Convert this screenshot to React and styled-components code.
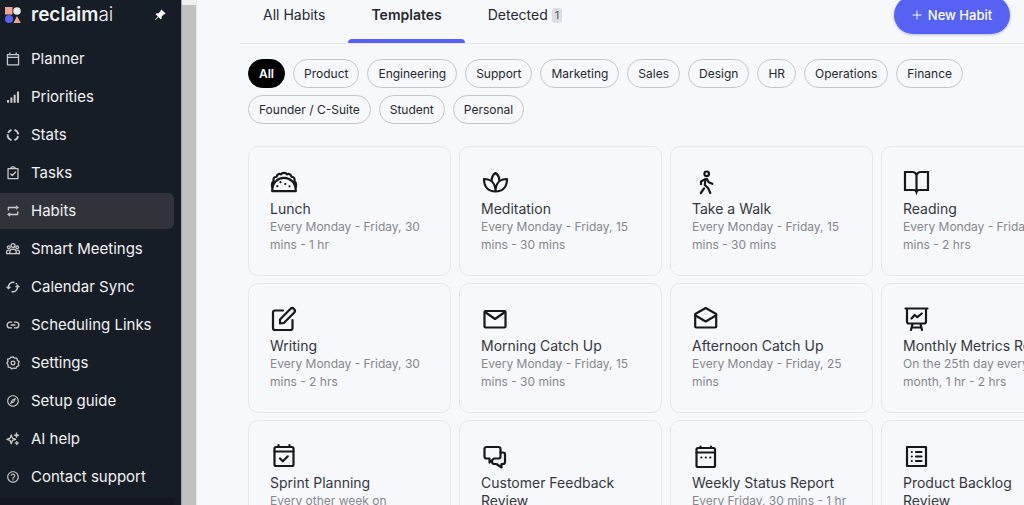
import React from 'react';
import styled, { createGlobalStyle } from 'styled-components';
import { MdOutlineExplore, MdHelpOutline } from 'react-icons/md';
import { BsPinAngleFill } from 'react-icons/bs';

const GlobalStyle = createGlobalStyle`
  * {
    box-sizing: border-box;
  }

  body {
    margin: 0;
    overflow: hidden;
    background-color: #f7f8fc;
    font-family: 'Inter', 'Liberation Sans', sans-serif;
  }

  button {
    font-family: inherit;
    cursor: pointer;
  }
`;

// Page shell
const Page = styled.div`
  display: flex;
  height: 100vh;
  overflow: hidden;
`;

// Sidebar
const Sidebar = styled.aside`
  display: flex;
  flex-direction: column;
  flex: 0 0 181px;
  background-color: #171d26;
  color: #f1f2f4;
`;

const Brand = styled.div`
  display: flex;
  align-items: center;
  height: 30px;
  margin-bottom: 11px;
  padding: 0 15px 0 5px;
`;

const BrandName = styled.span`
  flex: 1;
  margin-left: 10px;
  font-size: 19px;
  font-weight: 600;
  line-height: 24px;

  span {
    font-weight: 300;
  }
`;

const PinButton = styled.button`
  display: flex;
  padding: 0;
  border: 0;
  background: none;
  color: #fff;
`;

const Nav = styled.nav`
  display: flex;
  flex-direction: column;
  gap: 2px;
  padding-right: 7px;
`;

const NavLink = styled.a`
  display: flex;
  align-items: center;
  gap: 11px;
  flex: 0 0 36px;
  padding-left: 6px;
  border-radius: 0 6px 6px 0;
  background-color: ${({ $active }) => ($active ? '#303339' : 'transparent')};
  color: inherit;
  font-size: 15px;
  line-height: 20px;
  text-decoration: none;
  white-space: nowrap;

  svg {
    flex: none;
    color: #c9cbce;
  }
`;

const SidebarFooter = styled.div`
  flex: 1;
  margin: 3px 7px 0 0;
  background-color: #121720;
`;

const ScrollTrack = styled.div`
  flex: 0 0 16px;
  padding-top: 5px;
  border-left: 1px solid #a3a5a8;
  border-right: 1px solid #e4e5e9;
  background-color: #f1f1f3;
`;

const ScrollThumb = styled.div`
  height: 100%;
  background-color: #c1c1c1;
`;

// Main area
const Main = styled.main`
  flex: 1;
  min-width: 0;
  padding-left: 43px;
  overflow: hidden;
`;

const Header = styled.header`
  display: flex;
  justify-content: space-between;
  align-items: flex-start;
  height: 48px;
  margin-top: -4px;
  padding-right: 14px;
  border-bottom: 1px solid #e6e7eb;
`;

const Tabs = styled.div`
  display: flex;
  height: 47px;
`;

const Tab = styled.button`
  display: flex;
  align-items: center;
  gap: 4px;
  padding: 0 23px 6px;
  border: 0;
  border-bottom: 3px solid transparent;
  background: none;
  color: #25282d;
  font-size: 14px;
  font-weight: ${({ $active }) => ($active ? 600 : 400)};
  line-height: 20px;
  position: relative;

  &::after {
    content: '';
    display: ${({ $active }) => ($active ? 'block' : 'none')};
    position: absolute;
    right: 0;
    bottom: -3px;
    left: 0;
    height: 4px;
    border-radius: 4px 4px 0 0;
    background-color: #5562f5;
  }
`;

const Badge = styled.span`
  padding: 0 3px;
  border-radius: 3px;
  background-color: #dcdde1;
  color: #55585e;
  font-size: 11px;
  line-height: 15px;
`;

const NewButton = styled.button`
  display: flex;
  align-items: center;
  justify-content: center;
  gap: 6px;
  min-width: 116px;
  height: 38px;
  border: 0;
  border-radius: 19px;
  background-color: #5562f3;
  box-shadow: 0 1px 3px rgba(40, 50, 140, 0.3);
  color: #fff;
  font-size: 13px;
  font-weight: 500;
`;

const Chips = styled.div`
  display: flex;
  flex-wrap: wrap;
  gap: 7px 8px;
  padding: 15px 8px 0;
`;

const Chip = styled.button`
  height: 29px;
  padding: 0 10px;
  border: 1px solid ${({ $active }) => ($active ? '#000' : '#c4c5ca')};
  border-radius: 15px;
  background-color: ${({ $active }) => ($active ? '#000' : 'transparent')};
  color: ${({ $active }) => ($active ? '#fff' : '#25282d')};
  font-size: 12px;
  font-weight: ${({ $active }) => ($active ? 600 : 400)};
`;

const Grid = styled.div`
  display: grid;
  grid-template-columns: repeat(4, minmax(203px, 1fr));
  gap: 7px 8px;
  padding: 22px 8px 0;
`;

const Card = styled.button`
  display: flex;
  flex-direction: column;
  align-items: flex-start;
  min-height: 130px;
  padding: 21px;
  border: 1px solid #e6e7eb;
  border-radius: 10px;
  background: none;
  text-align: left;
`;

const CardIcon = styled.svg`
  flex: none;
  width: 28px;
  height: 28px;
  margin-bottom: 4px;
  fill: none;
  stroke: #15181d;
  stroke-width: 2.2;
  stroke-linecap: round;
  stroke-linejoin: round;
`;

const CardTitle = styled.span`
  color: #34373b;
  font-size: 14px;
  line-height: 18px;
`;

const CardText = styled.span`
  color: #85878b;
  font-size: 12px;
  line-height: 18px;
`;

// Small icons for the sidebar
const NavSvg = ({ children }) => (
  <svg
    width="14"
    height="14"
    viewBox="0 0 24 24"
    fill="none"
    stroke="currentColor"
    strokeWidth="2.2"
    strokeLinejoin="round"
    aria-hidden="true"
  >
    {children}
  </svg>
);

const PlannerIcon = () => (
  <NavSvg>
    <path d="M2.500 4.500h19v17.500h-19zM2.500 9.300h19M6.500 4.500V1M17.500 4.500V1" />
  </NavSvg>
);

const PrioritiesIcon = () => (
  <NavSvg>
    <path strokeWidth="3.500" d="M3.500 17v5M9.200 13v9M14.800 8v14M20.500 2.500V22" />
  </NavSvg>
);

const StatsIcon = () => (
  <NavSvg>
    <path
      strokeWidth="3.200"
      d="M9.500 3.300A9 9 0 0 0 3.800 8.500M3 11a9 9 0 0 0 6.500 9.700M14.500 3.300A9 9 0 0 1 21 11M20.600 13.800A9 9 0 0 1 14.500 20.700"
    />
  </NavSvg>
);

const TasksIcon = () => (
  <NavSvg>
    <path d="M3.500 4.500h17v17h-17zM8.500 4.500c0-4 7-4 7 0M7.500 13l3.200 3.200L17 9.800" />
  </NavSvg>
);

const HabitsIcon = () => (
  <NavSvg>
    <path d="M4 11V6h14M20 13v5H6" />
    <path fill="currentColor" strokeWidth="1" d="M17.500 3 21.500 6l-4 3zM6.500 15l-4 3 4 3z" />
  </NavSvg>
);

const MeetingsIcon = () => (
  <NavSvg>
    <circle cx="12" cy="6" r="3.400" />
    <circle cx="4.800" cy="9" r="2.300" />
    <circle cx="19.200" cy="9" r="2.300" />
    <path d="M6.500 20v-3.500c0-5.500 11-5.500 11 0V20zM6 20H1v-3c0-2 2-3.200 4.500-3M18 20h5v-3c0-2-2-3.200-4.500-3" />
  </NavSvg>
);

const SyncIcon = () => (
  <NavSvg>
    <path
      strokeWidth="2.600"
      d="M14.500 4.200A8 8 0 0 0 4.200 12.500M9.500 19.800A8 8 0 0 0 19.800 11.500M17 5.500l1.500 2"
    />
    <path fill="currentColor" strokeWidth="1" d="M.8 12h7L4.200 16zM23.200 12h-7l3.600-4z" />
  </NavSvg>
);

const LinkIcon = () => (
  <NavSvg>
    <path
      strokeWidth="2.400"
      d="M10.500 7H7a5 5 0 0 0 0 10h3.500M13.500 7H17a5 5 0 0 1 0 10h-3.500M8 12h8"
    />
  </NavSvg>
);

const SettingsIcon = () => (
  <NavSvg>
    <circle cx="12" cy="12" r="3.200" />
    <path d="M12 1.500l2.900 2.300 3.700-.1.900 3.600 3 2.100L21.200 13l.8 3.600-3.400 1.500-1.600 3.300-3.600-.8L10 22.200l-2.600-2.600-3.700-.5-.1-3.700L1.500 12.300l1.900-3.200-.6-3.600 3.500-1L9 1.800z" />
  </NavSvg>
);

const SparkIcon = () => (
  <NavSvg>
    <path d="M9 5l2 5.500 5.500 2L11 14.500 9 20l-2-5.500-5.500-2L7 10.500z" />
    <path
      fill="currentColor"
      strokeWidth="1"
      d="M18 1l1.200 3.300L22.500 5.500l-3.300 1.200L18 10l-1.200-3.300-3.300-1.200 3.300-1.200zM18.500 15.500l1 2.500 2.500 1-2.500 1-1 2.500-1-2.500-2.500-1 2.500-1z"
    />
  </NavSvg>
);

const PlusIcon = () => (
  <svg width="10" height="10" viewBox="0 0 10 10" stroke="currentColor" aria-hidden="true">
    <path d="M5 .5v9M.5 5h9" />
  </svg>
);

const Logo = () => (
  <svg width="16" height="16" viewBox="0 0 16 16" aria-hidden="true">
    <rect width="7.500" height="7.500" fill="#f0a593" />
    <circle cx="12" cy="4" r="3.800" fill="#e9eaf0" />
    <circle cx="4" cy="12" r="4" fill="#5562f5" />
    <path d="M12 9l3.800 7H8.500z" fill="#f0a593" />
  </svg>
);

const navItems = [
  { label: 'Planner', icon: <PlannerIcon /> },
  { label: 'Priorities', icon: <PrioritiesIcon /> },
  { label: 'Stats', icon: <StatsIcon /> },
  { label: 'Tasks', icon: <TasksIcon /> },
  { label: 'Habits', icon: <HabitsIcon />, active: true },
  { label: 'Smart Meetings', icon: <MeetingsIcon /> },
  { label: 'Calendar Sync', icon: <SyncIcon /> },
  { label: 'Scheduling Links', icon: <LinkIcon /> },
  { label: 'Settings', icon: <SettingsIcon /> },
  { label: 'Setup guide', icon: <MdOutlineExplore size={14} /> },
  { label: 'AI help', icon: <SparkIcon /> },
  { label: 'Contact support', icon: <MdHelpOutline size={14} /> },
];

const categories = [
  'All',
  'Product',
  'Engineering',
  'Support',
  'Marketing',
  'Sales',
  'Design',
  'HR',
  'Operations',
  'Finance',
  'Founder / C-Suite',
  'Student',
  'Personal',
];

const templates = [
  {
    title: 'Lunch',
    text: 'Every Monday - Friday, 30 mins - 1 hr',
    icon: (
      <>
        <path d="M2.200 23.200h23.600C26 5.500 2 5.500 2.200 23.200z" />
        <path d="M2.200 19c-.7-3 .2-5 1.500-5.800C2.800 10.500 4.500 8.500 6.500 8.800 6.800 6.200 9.500 5.200 11 6.400c1.200-2 4.800-2 6 0 1.500-1.200 4.200-.2 4.500 2.400 2-.3 3.700 1.700 2.800 4.400 1.300.8 2.200 2.800 1.500 5.800" />
        <path d="M7.300 18.200h.01M10.500 14.200h.01M15.300 16h.01M19.500 18.300h.01" />
      </>
    ),
  },
  {
    title: 'Meditation',
    text: 'Every Monday - Friday, 15 mins - 30 mins',
    icon: (
      <>
        <path d="M14.500 23.500C7 23.500 3 18.500 3 11c6 0 11.500 3.500 11.500 12.500zM14.500 23.500C22 23.500 26 18.500 26 11c-6 0-11.500 3.500-11.500 12.500z" />
        <path d="M10.700 12.300c0-3 1.300-5.600 3.800-7.300 2.500 1.700 3.800 4.300 3.800 7.300" />
      </>
    ),
  },
  {
    title: 'Take a Walk',
    text: 'Every Monday - Friday, 15 mins - 30 mins',
    icon: (
      <>
        <circle cx="14.700" cy="5.800" r="2.300" />
        <path d="M9 16.200v-2.700l4.600-2.500h1.400l1.700 3.200 3.600 1.600M13.400 11.500l-.6 5.500 3.400 3.200 2.100 4.800M12 20.500 8.800 25" />
      </>
    ),
  },
  {
    title: 'Reading',
    text: 'Every Monday - Friday, 30 mins - 2 hrs',
    icon: (
      <path
        strokeLinejoin="miter"
        d="M13.500 23.500V7c-1-2.500-2-3-4-3H2v18h8.500c1.500 0 2.500.5 3 2 .5-1.500 1.500-2 3-2H25V4h-7.500c-2 0-3 .5-4 3"
      />
    ),
  },
  {
    title: 'Writing',
    text: 'Every Monday - Friday, 30 mins - 2 hrs',
    icon: (
      <>
        <path d="M13 5.500H5a2 2 0 0 0-2 2V23a2 2 0 0 0 2 2h15.500a2 2 0 0 0 2-2v-8" />
        <path d="M10 18.500v-4L20.300 4a2.500 2.500 0 0 1 3.800 3.700L13.800 18z" />
      </>
    ),
  },
  {
    title: 'Morning Catch Up',
    text: 'Every Monday - Friday, 15 mins - 30 mins',
    icon: (
      <>
        <rect x="3.500" y="6" width="21" height="16.500" rx="1" />
        <path d="m4 7 10 7L24 7" />
      </>
    ),
  },
  {
    title: 'Afternoon Catch Up',
    text: 'Every Monday - Friday, 25 mins',
    icon: (
      <>
        <path d="M3.200 9 13.700 3l10.500 6v12.500a1 1 0 0 1-1 1h-19a1 1 0 0 1-1-1z" />
        <path d="m3.500 10.500 10.200 6 10.200-6" />
      </>
    ),
  },
  {
    title: 'Monthly Metrics Review',
    text: 'On the 25th day every month, 1 hr - 2 hrs',
    icon: (
      <>
        <path d="M2.500 3.500h22M4 3.500v13a2 2 0 0 0 2 2h15a2 2 0 0 0 2-2v-13M9.500 19l-1.500 6M17.500 19l1.500 6M9 22.500h9" />
        <path d="m8.500 13.500 3.200-3.500 2.600 2.200 4.500-3.700" />
      </>
    ),
  },
  {
    title: 'Sprint Planning',
    text: 'Every other week on Monday, 1 hr',
    icon: (
      <>
        <rect x="4.500" y="5" width="19" height="19" rx="1.500" />
        <path d="M8.500 5V3M19.500 5V3M4.500 9.500h19" />
        <path d="m10 16.500 2.800 2.800 5-5" />
      </>
    ),
  },
  {
    title: 'Customer Feedback Review',
    text: 'Every Friday, 30 mins - 1 hr',
    icon: (
      <>
        <path d="M5.500 5h12a2 2 0 0 1 2 2v7.500a2 2 0 0 1-2 2H13l-4.500 4v-4h-3a2 2 0 0 1-2-2V7a2 2 0 0 1 2-2z" />
        <path d="M19.500 10.500h2.500a2 2 0 0 1 2 2V20a2 2 0 0 1-2 2h-1.500v3.500L15.500 22H13c-1.500 0-2-1-2-3" />
      </>
    ),
  },
  {
    title: 'Weekly Status Report',
    text: 'Every Friday, 30 mins - 1 hr',
    icon: (
      <>
        <rect x="4.500" y="6" width="18.500" height="19" rx="1.500" />
        <path d="M8.500 6V4.500M19 6V4.500M4.500 10.500H23" />
        <path d="M9.300 15.500h.01M13.800 15.500h.01M18.300 15.500h.01" />
      </>
    ),
  },
  {
    title: 'Product Backlog Review',
    text: 'Every week on Monday, 1 hr',
    icon: (
      <>
        <rect x="4" y="5" width="19" height="19" />
        <path d="M8.800 10h.01M8.800 14.500h.01M8.800 19h.01M13 10h5.500M13 14.500h5.500M13 19h5.500" />
      </>
    ),
  },
];

const App = () => {
  return (
    <Page>
      <GlobalStyle />
      <Sidebar>
        <Brand>
          <Logo />
          <BrandName>
            reclaim<span>ai</span>
          </BrandName>
          <PinButton aria-label="Pin sidebar">
            <BsPinAngleFill size={12} />
          </PinButton>
        </Brand>
        <Nav>
          {navItems.map((item) => (
            <NavLink key={item.label} href="#" $active={item.active}>
              {item.icon}
              {item.label}
            </NavLink>
          ))}
        </Nav>
        <SidebarFooter />
      </Sidebar>
      <ScrollTrack>
        <ScrollThumb />
      </ScrollTrack>
      <Main>
        <Header>
          <Tabs>
            <Tab>All Habits</Tab>
            <Tab $active>Templates</Tab>
            <Tab>
              Detected <Badge>1</Badge>
            </Tab>
          </Tabs>
          <NewButton>
            <PlusIcon />
            New Habit
          </NewButton>
        </Header>
        <Chips>
          {categories.map((name) => (
            <Chip key={name} $active={name === 'All'}>
              {name}
            </Chip>
          ))}
        </Chips>
        <Grid>
          {templates.map((item) => (
            <Card key={item.title}>
              <CardIcon viewBox="0 0 28 28" aria-hidden="true">
                {item.icon}
              </CardIcon>
              <CardTitle>{item.title}</CardTitle>
              <CardText>{item.text}</CardText>
            </Card>
          ))}
        </Grid>
      </Main>
    </Page>
  );
};

export default App;
